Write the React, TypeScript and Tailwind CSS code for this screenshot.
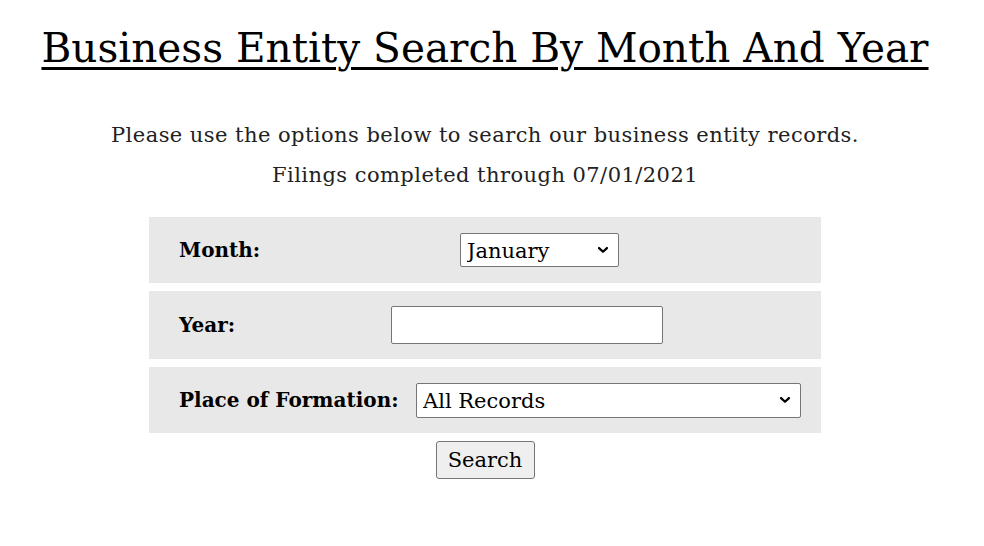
const serif = { fontFamily: '"DejaVu Serif", "Liberation Serif", serif' };

function Chevron() {
  return (
    <svg
      viewBox="0 0 12 8"
      className="pointer-events-none absolute right-[10px] top-1/2 h-[7px] w-[12px] -translate-y-1/2"
      fill="none"
      stroke="#000"
      strokeWidth="2.6"
      strokeLinecap="round"
      strokeLinejoin="round"
    >
      <path d="M1.5 1.8 L6 6 L10.5 1.8" />
    </svg>
  );
}

function Row({ label, labelWidth, height, children }: { label: string; labelWidth: string; height: string; children: React.ReactNode }) {
  return (
    <div className={`flex w-full items-center bg-[#e8e8e8] pl-[30px] ${height}`}>
      <label className={`shrink-0 text-[20px] font-bold text-black ${labelWidth}`}>{label}</label>
      {children}
    </div>
  );
}

export default function App() {
  return (
    <div className="min-h-screen w-full bg-white text-black" style={serif}>
      <div className="flex w-[970px] flex-col items-center pt-[24px]">
        <h1 className="text-[40.6px] leading-[48px] font-normal underline decoration-[3px] underline-offset-[5px]">
          Business Entity Search By Month And Year
        </h1>

        <div className="mt-[43px] text-center text-[21px] leading-[40px] tracking-[0.45px] text-[#222]">
          <p>Please use the options below to search our business entity records.</p>
          <p>Filings completed through 07/01/2021</p>
        </div>

        <form className="mt-[22px] flex w-[672px] flex-col items-center gap-[8px]" onSubmit={(e) => e.preventDefault()}>
          <Row label="Month:" labelWidth="w-[281px]" height="h-[66px]">
            <div className="relative">
              <select className="h-[34px] w-[159px] appearance-none rounded-[2px] border border-[#767676] bg-white pl-[6px] pt-[2px] text-[21px] text-black">
                <option>January</option>
                <option>February</option>
                <option>March</option>
                <option>April</option>
                <option>May</option>
                <option>June</option>
                <option>July</option>
                <option>August</option>
                <option>September</option>
                <option>October</option>
                <option>November</option>
                <option>December</option>
              </select>
              <Chevron />
            </div>
          </Row>

          <Row label="Year:" labelWidth="w-[212px]" height="h-[68px]">
            <input type="text" className="h-[38px] w-[272px] rounded-[2px] border border-[#767676] bg-white px-[4px] text-[21px]" />
          </Row>

          <Row label="Place of Formation:" labelWidth="w-[237px]" height="h-[66px]">
            <div className="relative">
              <select className="h-[35px] w-[385px] appearance-none rounded-[2px] border border-[#767676] bg-white pl-[6px] pt-[2px] text-[21px] text-black">
                <option>All Records</option>
                <option>Domestic</option>
                <option>Foreign</option>
              </select>
              <Chevron />
            </div>
          </Row>

          <button type="submit" className="h-[38px] w-[99px] rounded-[3px] border border-[#767676] bg-[#efefef] pt-[1px] text-[21px] text-black">
            Search
          </button>
        </form>
      </div>
    </div>
  );
}
